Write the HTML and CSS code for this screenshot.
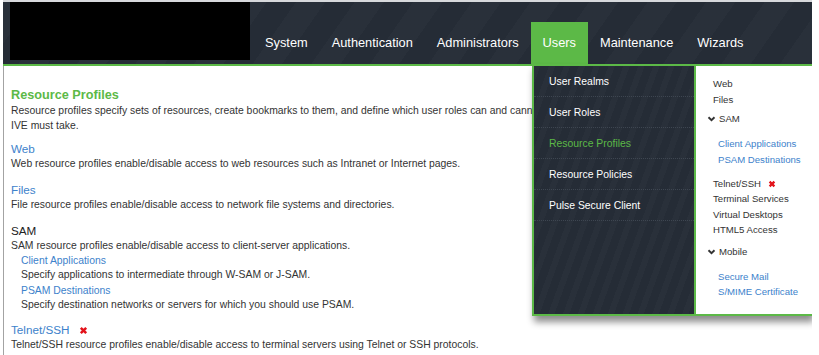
FILE: index.html
```html
<!DOCTYPE html>
<html lang="en">
<head>
    <meta charset="UTF-8">
    <title>Resource Profiles</title>
    <link rel="stylesheet" href="styles.css">
</head>
<body>

<div class="frame">
    <!-- Top navigation -->
    <header class="topbar">
        <div class="logo"></div>
        <nav class="nav">
            <span class="nav-item">System</span>
            <span class="nav-item">Authentication</span>
            <span class="nav-item">Administrators</span>
            <span class="nav-item active">Users</span>
            <span class="nav-item">Maintenance</span>
            <span class="nav-item">Wizards</span>
        </nav>
    </header>

    <!-- Page content -->
    <main class="content">
        <div class="intro">
            <h1 class="page-title">Resource Profiles</h1>
            <p class="desc">Resource profiles specify sets of resources, create bookmarks to them, and define which user roles can and cannot access them and what actions the<br>IVE must take.</p>
        </div>

        <div class="section">
            <div class="section-head"><a class="section-link">Web</a></div>
            <p class="desc">Web resource profiles enable/disable access to web resources such as Intranet or Internet pages.</p>
        </div>

        <div class="section">
            <div class="section-head"><a class="section-link">Files</a></div>
            <p class="desc">File resource profiles enable/disable access to network file systems and directories.</p>
        </div>

        <div class="section">
            <div class="section-head">SAM</div>
            <p class="desc">SAM resource profiles enable/disable access to client-server applications.</p>
            <div class="sub">
                <a class="sub-link">Client Applications</a>
                <p class="sub-desc">Specify applications to intermediate through W-SAM or J-SAM.</p>
            </div>
            <div class="sub">
                <a class="sub-link">PSAM Destinations</a>
                <p class="sub-desc">Specify destination networks or servers for which you should use PSAM.</p>
            </div>
        </div>

        <div class="section section-last">
            <div class="section-head">
                <a class="section-link">Telnet/SSH</a>
                <svg class="x-mark x-mark-lg" viewBox="0 0 10 10"><path d="M2 2 L8 8 M8 2 L2 8"/></svg>
            </div>
            <p class="desc">Telnet/SSH resource profiles enable/disable access to terminal servers using Telnet or SSH protocols.</p>
        </div>
    </main>

    <!-- Users dropdown -->
    <div class="dropdown">
        <ul class="menu-left">
            <li class="menu-row">User Realms</li>
            <li class="menu-row">User Roles</li>
            <li class="menu-row current">Resource Profiles</li>
            <li class="menu-row">Resource Policies</li>
            <li class="menu-row">Pulse Secure Client</li>
        </ul>
        <div class="menu-right">
            <div class="menu-item">Web</div>
            <div class="menu-item">Files</div>
            <div class="menu-group">
                <svg class="chevron" viewBox="0 0 10 7"><path d="M1.5 1.5 L5 5 L8.5 1.5"/></svg>SAM
            </div>
            <div class="menu-sub">
                <a class="menu-link">Client Applications</a>
                <a class="menu-link">PSAM Destinations</a>
            </div>
            <div class="menu-block">
                <div class="menu-item">Telnet/SSH <svg class="x-mark" viewBox="0 0 10 10"><path d="M2 2 L8 8 M8 2 L2 8"/></svg></div>
                <div class="menu-item">Terminal Services</div>
                <div class="menu-item">Virtual Desktops</div>
                <div class="menu-item">HTML5 Access</div>
            </div>
            <div class="menu-group group-mobile">
                <svg class="chevron" viewBox="0 0 10 7"><path d="M1.5 1.5 L5 5 L8.5 1.5"/></svg>Mobile
            </div>
            <div class="menu-sub">
                <a class="menu-link">Secure Mail</a>
                <a class="menu-link">S/MIME Certificate</a>
            </div>
        </div>
    </div>
</div>

</body>
</html>
```

FILE: styles.css
```css
/* Colours */
:root {
    --bar-bg: #252c36;
    --green: #5cb947;
    --link: #3d82cb;
    --text: #333;
}

body {
    margin: 0;
    background: #fff;
    font-family: 'Liberation Sans', Arial, sans-serif;
    color: var(--text);
}

.frame {
    position: relative;
    width: 809px;
    height: 355px;
    margin-left: 3px;
    overflow: hidden;
}

/* Top bar */
.topbar {
    display: flex;
    height: 62px;
    border-top: 2px solid #d7d9dc;
    border-bottom: 2px solid var(--green);
    background-color: var(--bar-bg);
    background-image: repeating-linear-gradient(125deg, rgba(255, 255, 255, 0.018) 0 24px, transparent 24px 48px);
}

.logo {
    width: 240px;
    height: 58px;
    margin-left: 7px;
    background: #000;
}

.nav {
    display: flex;
    align-self: flex-end;
    margin-left: 3px;
}

.nav-item {
    height: 42px;
    padding: 0 12px;
    line-height: 42px;
    font-size: 12.8px;
    color: #fff;
}

.nav-item.active {
    background: var(--green);
}

/* Content */
.content {
    height: 300px;
    padding: 21px 0 0 7px;
    border-left: 1px solid #a3a3a3;
}

.page-title {
    margin: 0;
    font-size: 12.7px;
    line-height: 16px;
    font-weight: bold;
    color: var(--green);
}

.desc {
    margin: 0;
    font-size: 10.4px;
    line-height: 15px;
}

.section {
    margin-top: 11px;
}

.intro + .section {
    margin-top: 7.5px;
}

.section-last {
    margin-top: 10.5px;
}

.section-head {
    font-size: 11.7px;
    line-height: 15px;
    color: #222;
}

.section-link {
    color: var(--link);
}

.sub {
    margin: 1.5px 0 0 10px;
}

.sub + .sub {
    margin-top: 3px;
}

.sub-link {
    display: block;
    font-size: 10.4px;
    line-height: 14px;
    color: var(--link);
}

.sub-desc {
    margin: 0;
    font-size: 10.4px;
    line-height: 13px;
}

.x-mark {
    width: 8px;
    height: 8px;
    margin-left: 4px;
    vertical-align: -1px;
}

.x-mark path {
    fill: none;
    stroke: #e3121a;
    stroke-width: 2.8;
}

.x-mark-lg {
    width: 9px;
    height: 9px;
    margin-left: 6px;
}

/* Dropdown */
.dropdown {
    position: absolute;
    top: 64px;
    left: 529px;
    display: flex;
    width: 280px;
    height: 252px;
    box-sizing: border-box;
    border: 2px solid var(--green);
    border-right: none;
    box-shadow: 2px 6px 7px rgba(0, 0, 0, 0.45);
}

.menu-left {
    width: 160px;
    margin: 0;
    padding: 0;
    list-style: none;
    border-right: 2px solid var(--green);
    background-color: var(--bar-bg);
    background-image: repeating-linear-gradient(110deg, rgba(255, 255, 255, 0.02) 0 6px, transparent 6px 14px);
}

.menu-row {
    height: 30px;
    padding-left: 15px;
    line-height: 32px;
    font-size: 10.4px;
    color: #fff;
    border-bottom: 1px dotted #3e4651;
}

.menu-row.current {
    color: var(--green);
}

.menu-right {
    flex: 1;
    padding-top: 10px;
    background: #fff;
    font-size: 9.6px;
    line-height: 15.5px;
}

.menu-item {
    padding-left: 17px;
}

.menu-group {
    margin-top: 4px;
    padding-left: 11px;
}

.group-mobile {
    margin-top: 6px;
}

.chevron {
    width: 9px;
    height: 6px;
    margin-right: 3px;
    vertical-align: 0;
}

.chevron path {
    fill: none;
    stroke: #333;
    stroke-width: 2.2;
}

.menu-sub {
    margin-top: 9.5px;
    padding-left: 22px;
}

.menu-link {
    display: block;
    color: var(--link);
}

.menu-block {
    margin-top: 8.5px;
}
```
